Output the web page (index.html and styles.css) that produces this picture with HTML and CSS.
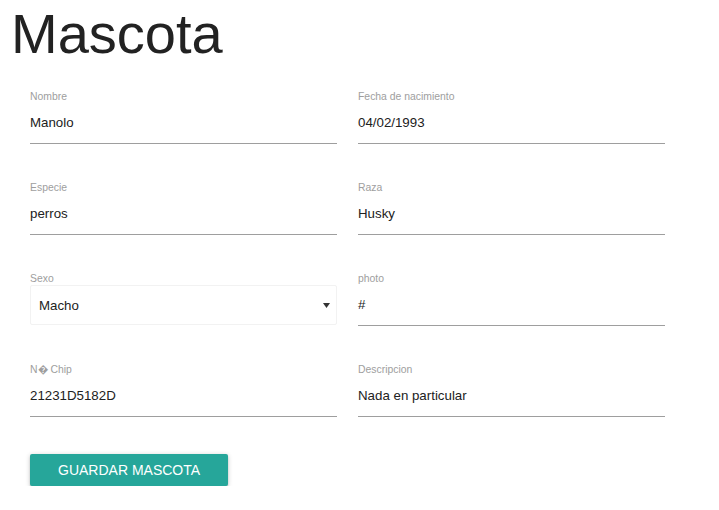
FILE: index.html
```html
<!DOCTYPE html>
<html lang="es">
<head>
<meta charset="utf-8">
<title>Mascota</title>
<link rel="stylesheet" href="styles.css">
</head>
<body>
  <h1 class="title">Mascota</h1>
  <form class="form">
    <div class="field">
      <label class="label">Nombre</label>
      <div class="input">Manolo</div>
    </div>
    <div class="field">
      <label class="label">Fecha de nacimiento</label>
      <div class="input">04/02/1993</div>
    </div>
    <div class="field">
      <label class="label">Especie</label>
      <div class="input">perros</div>
    </div>
    <div class="field">
      <label class="label">Raza</label>
      <div class="input">Husky</div>
    </div>
    <div class="field">
      <label class="label">Sexo</label>
      <div class="select">
        <span class="select-value">Macho</span>
        <svg class="select-arrow" width="7" height="5" viewBox="0 0 7 5"><path d="M0 0H7L3.5 5Z" fill="#333"/></svg>
      </div>
    </div>
    <div class="field">
      <label class="label">photo</label>
      <div class="input">#</div>
    </div>
    <div class="field">
      <label class="label">N&#xFFFD; Chip</label>
      <div class="input">21231D5182D</div>
    </div>
    <div class="field">
      <label class="label">Descripcion</label>
      <div class="input">Nada en particular</div>
    </div>
    <div class="actions">
      <button type="button" class="btn">Guardar Mascota</button>
    </div>
  </form>
</body>
</html>
```
FILE: styles.css
```css
html, body {
  margin: 0;
  padding: 0;
  background: #fff;
}
body {
  font-family: "Liberation Sans", Arial, sans-serif;
  color: #212121;
}
.title {
  margin: 2px 0 0;
  padding-left: 11px;
  font-size: 56px;
  line-height: 64px;
  font-weight: 400;
  color: #222;
}
.form {
  display: grid;
  grid-template-columns: 307px 307px;
  column-gap: 21px;
  row-gap: 37px;
  align-items: start;
  padding-left: 30px;
  margin-top: 24px;
}
.field {
  display: flex;
  flex-direction: column;
}
.label {
  font-size: 10.4px;
  line-height: 14px;
  color: #9e9e9e;
}
.input {
  margin-top: 9px;
  height: 31px;
  box-sizing: border-box;
  padding: 0;
  font-size: 13.3px;
  line-height: 20px;
  color: #212121;
  border-bottom: 1px solid #9e9e9e;
}
.select {
  margin-top: -1px;
  height: 40px;
  box-sizing: border-box;
  border: 1px solid #f2f2f2;
  border-radius: 2px;
  display: flex;
  align-items: center;
  justify-content: space-between;
  padding: 0 6px 0 8px;
  font-size: 13.3px;
  color: #222;
}
.select-arrow {
  display: block;
}
.actions {
  grid-column: 1 / -1;
}
.btn {
  display: inline-block;
  height: 32px;
  padding: 0 28px;
  border: none;
  border-radius: 2px;
  background: #26a69a;
  color: #fff;
  font-family: "Liberation Sans", Arial, sans-serif;
  font-size: 14px;
  text-transform: uppercase;
  box-shadow: 0 2px 2px 0 rgba(0,0,0,.14), 0 3px 1px -2px rgba(0,0,0,.12), 0 1px 5px 0 rgba(0,0,0,.2);
  cursor: pointer;
}
```
